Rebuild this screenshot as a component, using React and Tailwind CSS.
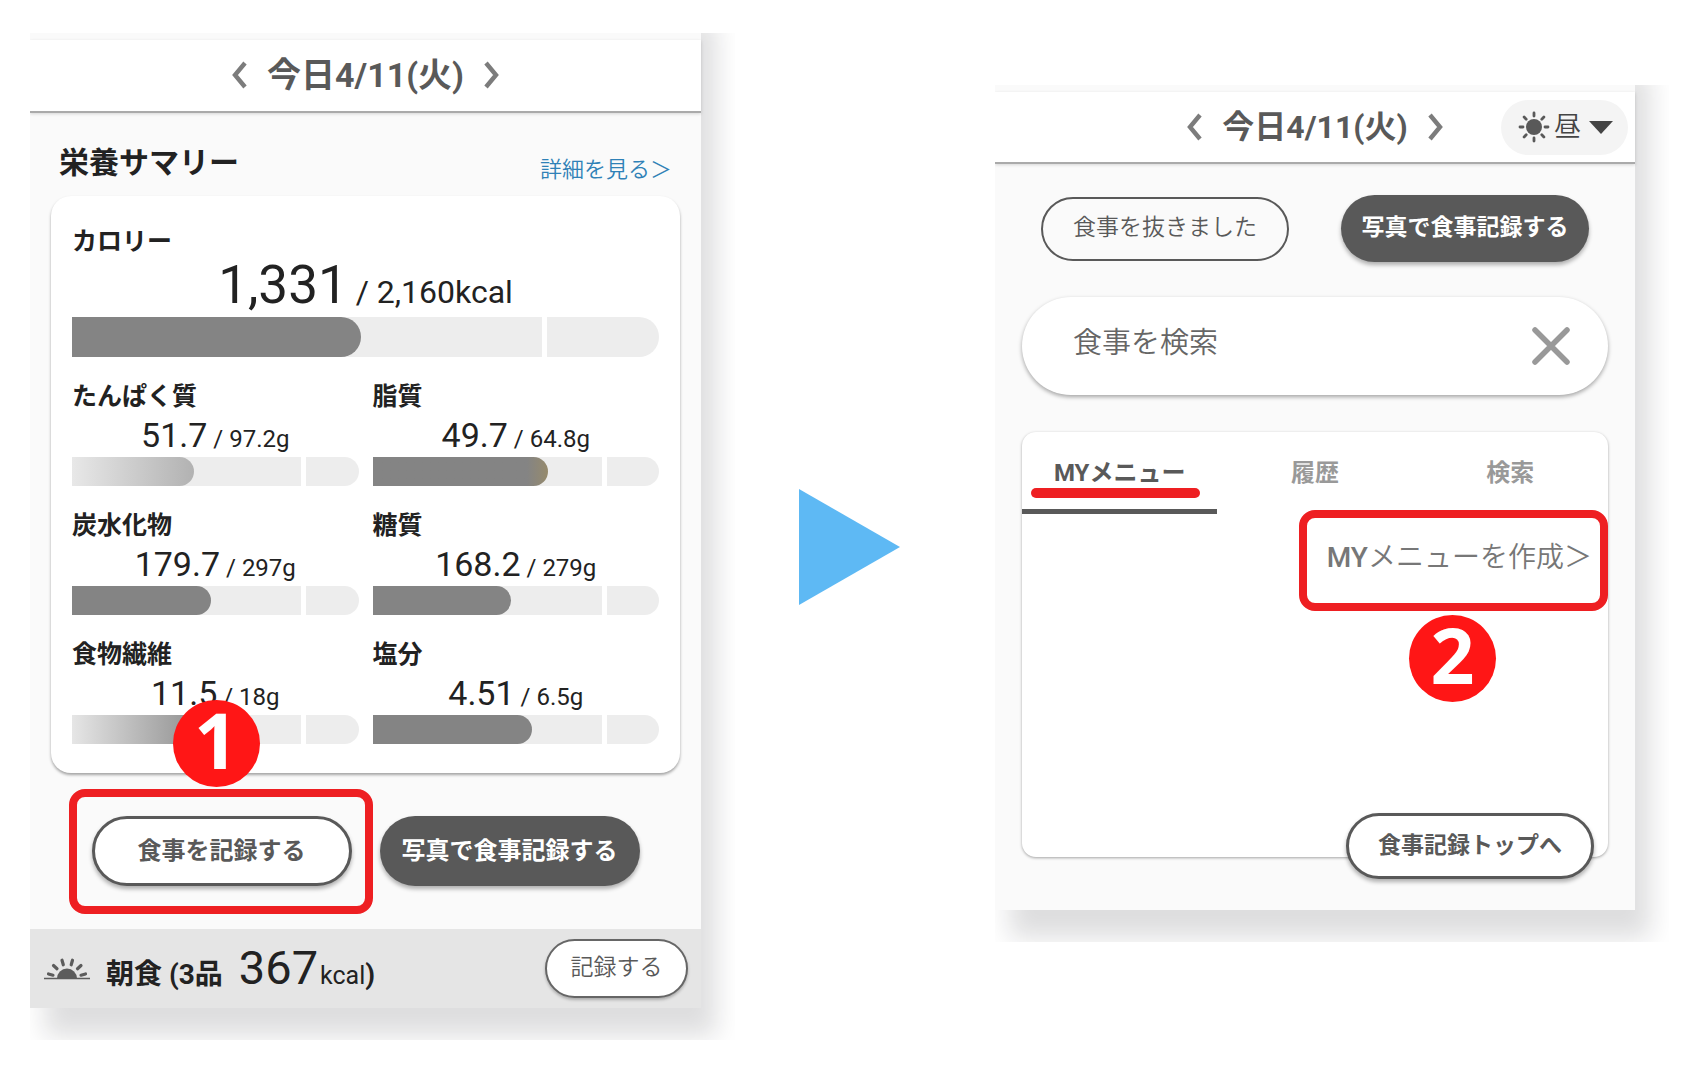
import React, { useState } from 'react';

const GOAL_SHARE = 80;

const nutrients = [
  { name: 'たんぱく質', value: 51.7, goal: 97.2, fill: 'bg-linear-to-r from-[#e8e8e8] to-[#b2b2b2]' },
  { name: '脂質', value: 49.7, goal: 64.8, fill: 'bg-linear-to-r from-[#848484] from-88% to-[#968a6c]' },
  { name: '炭水化物', value: 179.7, goal: 297, fill: 'bg-[#848484]' },
  { name: '糖質', value: 168.2, goal: 279, fill: 'bg-[#848484]' },
  { name: '食物繊維', value: 11.5, goal: 18, fill: 'bg-linear-to-r from-[#e6e6e6] to-[#848484]' },
  { name: '塩分', value: 4.51, goal: 6.5, fill: 'bg-[#848484]' },
];

const tabs = ['MYメニュー', '履歴', '検索'];

const Chevron = ({ direction }) => (
  <svg viewBox="0 0 16 28" className="h-7 w-4" fill="none" stroke="#7c7c7c" strokeWidth="4.400">
    <path d={direction === 'left' ? 'M14 2 4 14l10 12' : 'M2 2l10 12L2 26'} />
  </svg>
);

const SunriseIcon = () => (
  <svg viewBox="0 0 46 22" className="h-[22px] w-[46px]" stroke="#5c5c5c" strokeLinecap="round">
    <path d="M13 20.500a10 10 0 0 1 20 0z" fill="#5c5c5c" stroke="none" />
    <path d="M0 20.500h46" strokeWidth="1.500" strokeLinecap="butt" />
    <path d="M4.500 16l4.500 1.200M9.500 7.500l3.500 3.200M18 2.200l1.300 4.600M28.500 2.200l-1.300 4.600M37 7.500l-3.500 3.200M41.500 16l-4.500 1.200" strokeWidth="3.200" />
  </svg>
);

const SunIcon = () => (
  <svg viewBox="0 0 32 32" className="h-8 w-8" stroke="#595959" strokeWidth="2.800" strokeLinecap="round">
    <circle cx="16" cy="16" r="8" fill="#595959" stroke="none" />
    <path d="M16 2v3M16 27v3M2 16h3M27 16h3M6.100 6.100l2.100 2.100M23.800 23.800l2.100 2.100M6.100 25.900l2.100-2.100M23.800 8.200l2.100-2.100" />
  </svg>
);

const DateNav = ({ className }) => (
  <div className={`flex items-center ${className}`}>
    <button type="button" aria-label="前の日"><Chevron direction="left" /></button>
    <span>今日4/11(火)</span>
    <button type="button" aria-label="次の日"><Chevron direction="right" /></button>
  </div>
);

// The panel starts above the clipped edge so its shadow runs the full height
const Screen = ({ children, className }) => (
  <div className={`overflow-hidden pr-[34px] pb-8 ${className}`}>
    <div className="-mt-10 flow-root bg-[#fafafa] pt-[47px] shadow-[15px_28px_24px_rgba(20,20,30,0.14)]">{children}</div>
  </div>
);

const Meter = ({ value, goal, fill, className }) => (
  <div className={`relative grid grid-cols-[80%_1fr] gap-[5px] ${className}`}>
    <div className="bg-[#ededed]" />
    <div className="rounded-r-full bg-[#ededed]" />
    <div
      className={`absolute inset-y-0 left-0 rounded-r-full ${fill}`}
      style={{ width: `${(value / goal) * GOAL_SHARE}%` }}
    />
  </div>
);

const Callout = ({ className }) => (
  <div className={`pointer-events-none absolute rounded-2xl border-8 border-[#ee1f22] ${className}`} />
);

const StepBadge = ({ number, className }) => (
  <div className={`pointer-events-none absolute z-10 flex size-[87px] items-center justify-center rounded-full bg-[#ff1616] pb-2 font-['Open_Sans',sans-serif] text-[77px] leading-[77px] font-bold text-white ${className}`}>
    {number}
  </div>
);

const SummaryScreen = () => (
  <Screen>
    <header className="flex h-[73px] items-center justify-center border-b-2 border-[#aaa] bg-white pb-0.5 shadow-[0_1px_3px_rgba(0,0,0,0.15)]">
      <DateNav className="gap-5 text-[34px] leading-10 font-bold text-[#595959]" />
    </header>

    <div className="flex items-end justify-between pt-[33px] pr-[29px] pb-4 pl-[29px]">
      <h1 className="text-[30px] leading-[34px] font-bold">栄養サマリー</h1>
      <a href="#detail" className="text-[22px] leading-5 font-[350] text-[#2f81b7]">詳細を見る＞</a>
    </div>

    <section className="mx-[21px] rounded-[20px] bg-white px-[21px] pt-[31px] pb-[29px] shadow-[0_2px_3px_rgba(0,0,0,0.35)]">
      <h2 className="text-[25px] leading-[30px] font-bold">カロリー</h2>
      <p className="mb-1 text-center text-[53px] leading-[56px]">
        1,331<span className="text-[32px] leading-none"> / 2,160kcal</span>
      </p>
      <Meter value={1331} goal={2160} fill="bg-[#848484]" className="h-10" />

      <div className="mt-6 grid grid-cols-2 gap-x-[14px] gap-y-6">
        {nutrients.map((item) => (
          <div key={item.name}>
            <h3 className="text-[25px] leading-8 font-bold">{item.name}</h3>
            <p className="text-center text-[34px] leading-[44px]">
              {item.value}<span className="text-[24px] leading-none"> / {item.goal}g</span>
            </p>
            <Meter value={item.value} goal={item.goal} fill={item.fill} className="h-[29px]" />
          </div>
        ))}
      </div>
    </section>

    <div className="flex justify-center gap-7 py-[43px]">
      <div className="relative">
        <button type="button" className="h-[70px] w-[260px] rounded-full border-[3px] border-[#595959] bg-white text-[24px] font-bold text-[#595959] shadow-[0_3px_4px_rgba(0,0,0,0.3)]">
          食事を記録する
        </button>
        <Callout className="-top-[27px] -right-[21px] -bottom-[28px] -left-[23px]" />
        <StepBadge number={1} className="-top-[116px] left-[81px]" />
      </div>
      <button type="button" className="h-[70px] w-[260px] rounded-full bg-[#595959] text-[24px] font-bold text-white shadow-[0_3px_4px_rgba(0,0,0,0.3)]">
        写真で食事記録する
      </button>
    </div>

    <footer className="flex h-[79px] items-center justify-between bg-[#e5e5e5] pr-[13px] pl-[14px]">
      <div className="flex items-center gap-4">
        <SunriseIcon />
        <p className="flex items-baseline pb-0.5 text-[28px] leading-none font-bold">
          <span>朝食 (3品</span>
          <span className="ml-4 text-[47px] font-normal">367</span>
          <span className="ml-0.5 text-[25px] font-normal">kcal</span>
          <span>)</span>
        </p>
      </div>
      <button type="button" className="h-[59px] w-[143px] rounded-full border-2 border-[#666] bg-white text-[23px] font-[350] text-[#595959] shadow-[0_2px_3px_rgba(0,0,0,0.25)]">
        記録する
      </button>
    </footer>
  </Screen>
);

const MenuScreen = () => {
  const [activeTab, setActiveTab] = useState(tabs[0]);
  const [query, setQuery] = useState('');

  return (
    <Screen className="mt-[52px]">
      <header className="grid h-[72px] grid-cols-[1fr_auto_1fr] items-center border-b-2 border-[#aaa] bg-white shadow-[0_1px_3px_rgba(0,0,0,0.15)]">
        <DateNav className="col-start-2 gap-5 text-[32px] leading-10 font-bold text-[#595959]" />
        <label className="relative mr-[7px] flex h-[55px] w-[127px] items-center justify-self-end rounded-full bg-[#f4f4f4] pl-[17px]">
          <SunIcon />
          <select aria-label="食事の時間帯" className="w-[78px] appearance-none pl-1 text-[27px] leading-10 font-[350] text-[#444]">
            <option>昼</option>
          </select>
          <svg viewBox="0 0 24 13" className="pointer-events-none absolute right-[15px] h-[13px] w-6" fill="#444">
            <path d="M0 0h24L12 13z" />
          </svg>
        </label>
      </header>

      <div className="flex items-center justify-center gap-[52px] pt-[31px]">
        <button type="button" className="h-16 w-[248px] rounded-full border-2 border-[#595959] text-[23px] font-[350] text-[#595959]">
          食事を抜きました
        </button>
        <button type="button" className="h-[67px] w-[248px] rounded-full bg-[#595959] text-[23px] font-bold text-white shadow-[0_3px_4px_rgba(0,0,0,0.3)]">
          写真で食事記録する
        </button>
      </div>

      <div className="mx-[27px] mt-[35px] flex h-[98px] items-center rounded-full bg-white pr-[38px] pl-[51px] shadow-[0_2px_4px_rgba(0,0,0,0.35)]">
        <input
          type="text"
          aria-label="食事を検索"
          value={query}
          onChange={(e) => setQuery(e.target.value)}
          placeholder="食事を検索"
          className="h-12 min-w-0 flex-1 pb-1.5 text-[29px] font-[350] outline-none placeholder:text-[#666]"
        />
        <button type="button" aria-label="クリア" onClick={() => setQuery('')}>
          <svg viewBox="0 0 38 38" className="size-[38px]" stroke="#999" strokeWidth="5.500" strokeLinecap="round">
            <path d="M3 3l32 32M35 3 3 35" />
          </svg>
        </button>
      </div>

      <section className="relative mx-[27px] mt-[37px] mb-[53px] flex min-h-[425px] flex-col items-end rounded-[14px] bg-white shadow-[0_1px_3px_rgba(0,0,0,0.35)]">
        <div role="tablist" className="grid w-full grid-cols-3">
          {tabs.map((tab) => (
            <button
              key={tab}
              type="button"
              role="tab"
              aria-selected={tab === activeTab}
              onClick={() => setActiveTab(tab)}
              className={`relative h-[82px] border-b-[5px] pt-1 text-[24px] font-bold ${
                tab === activeTab ? 'border-[#595959] text-[#595959]' : 'border-transparent text-[#999]'
              }`}
            >
              {tab}
              {tab === activeTab && (
                <span className="absolute right-[17px] bottom-[11px] left-[9px] h-2.5 rounded-full bg-[#ee1f22]" />
              )}
            </button>
          ))}
        </div>
        <div className="relative -mt-1 h-[101px] w-[309px]">
          <a href="#create" className="block pt-[30px] pr-4 text-right text-[28px] leading-9 font-[350] whitespace-nowrap text-[#777]">
            <span className="font-medium">MY</span>メニューを作成＞
          </a>
          <Callout className="inset-0" />
          <StepBadge number={2} className="top-[105px] left-[110px]" />
        </div>
        <button type="button" className="absolute right-[14px] -bottom-[22px] h-[66px] w-[248px] rounded-full border-[3px] border-[#595959] bg-white text-[23px] font-bold text-[#595959] shadow-[0_3px_4px_rgba(0,0,0,0.3)]">
          食事記録トップへ
        </button>
      </section>
    </Screen>
  );
};

const App = () => (
  <main className="grid min-h-screen grid-cols-[705fr_260fr_674fr] items-start bg-white pt-[33px] pr-[21px] pl-[30px] font-[Roboto,'Noto_Sans_CJK_JP',sans-serif] text-[#222]">
    <SummaryScreen />
    <svg viewBox="0 0 101 116" className="mt-[456px] ml-16 h-[116px] w-[101px]" fill="#5eb9f4">
      <path d="M0 0l101 58L0 116z" />
    </svg>
    <MenuScreen />
  </main>
);

export default App;
